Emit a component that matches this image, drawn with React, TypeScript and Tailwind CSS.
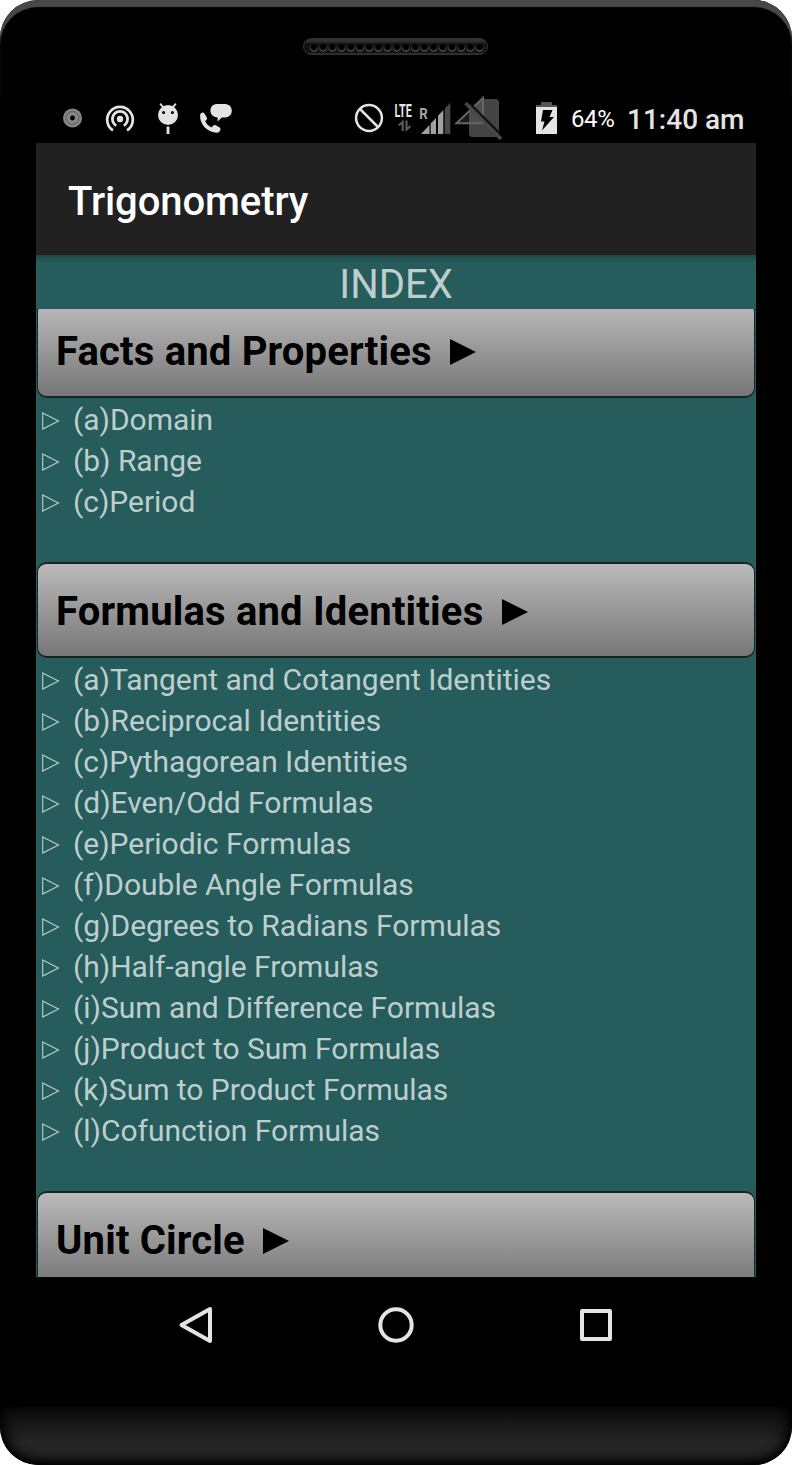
import React from "react";

interface Section {
  title: string;
  items: string[];
}

const sections: Section[] = [
  {
    title: "Facts and Properties",
    items: ["(a)Domain", "(b) Range", "(c)Period"],
  },
  {
    title: "Formulas and Identities",
    items: [
      "(a)Tangent and Cotangent Identities",
      "(b)Reciprocal Identities",
      "(c)Pythagorean Identities",
      "(d)Even/Odd Formulas",
      "(e)Periodic Formulas",
      "(f)Double Angle Formulas",
      "(g)Degrees to Radians Formulas",
      "(h)Half-angle Fromulas",
      "(i)Sum and Difference Formulas",
      "(j)Product to Sum Formulas",
      "(k)Sum to Product Formulas",
      "(l)Cofunction Formulas",
    ],
  },
  { title: "Unit Circle", items: [] },
];

const holes = Array.from({ length: 19 }, (_, i) => 11 + i * 9.2);

const Speaker: React.FC = () => (
  <svg width="186" height="18" viewBox="0 0 186 18">
    <defs>
      <linearGradient id="grille" x1="0" y1="0" x2="0" y2="1">
        <stop offset="0" stopColor="#2e2e2e" />
        <stop offset="0.2" stopColor="#303030" />
        <stop offset="0.3" stopColor="#151515" />
        <stop offset="0.85" stopColor="#101010" />
        <stop offset="1" stopColor="#3a3a3a" />
      </linearGradient>
      <linearGradient id="hole" x1="0" y1="0" x2="0" y2="1">
        <stop offset="0.3" stopColor="#161616" />
        <stop offset="1" stopColor="#6a6a6a" />
      </linearGradient>
    </defs>
    <rect x="0.5" y="0.5" width="184" height="16" rx="8" fill="url(#grille)" stroke="#333" />
    {holes.map((x) => (
      <circle key={x} cx={x} cy="9.3" r="3.7" fill="#000" stroke="url(#hole)" strokeWidth="1.1" />
    ))}
  </svg>
);

const StatusBar: React.FC = () => (
  <div className="flex h-12 items-center text-[#e4e4e4]">
    <svg width="500" height="48" viewBox="0 0 500 48" className="shrink-0">
      {/* disc */}
      <circle cx="36.5" cy="23" r="9.5" fill="#858585" />
      <circle cx="36.5" cy="23" r="6.5" fill="none" stroke="#5c5c5c" strokeWidth="1" />
      <circle cx="36.5" cy="23" r="2.4" fill="#000" />
      {/* hotspot */}
      <g fill="none" stroke="#e4e4e4" strokeWidth="2.7">
        <circle cx="84" cy="24" r="3.2" fill="#e4e4e4" stroke="none" />
        <path d="M80.2 30.6A7.6 7.6 0 1 1 87.8 30.6" />
        <path d="M77 35.4A12.8 12.8 0 1 1 91 35.4" />
      </g>
      {/* android lollipop */}
      <circle cx="132" cy="20" r="10" fill="#e4e4e4" />
      <path d="M124.2 8.6l3.2 4M139.8 8.6l-3.2 4" stroke="#e4e4e4" strokeWidth="1.8" />
      <circle cx="127.6" cy="17.5" r="1.5" fill="#000" />
      <circle cx="136.4" cy="17.5" r="1.5" fill="#000" />
      <rect x="130.6" y="31.5" width="2.8" height="7.5" fill="#e4e4e4" />
      {/* call with message */}
      <path
        d="M165 18.2c1-.8 2.6-1 3.4.3l2.3 3.7c.7 1.2.3 2.5-.7 3.2l-.9.7c1.3 3 3.6 5.2 6.4 6.4l1.5-1.6c.8-.9 2-1 3-.5l3.3 1.9c1.3.8 1.5 2 .9 3l-.9 1.4c-.5.7-1.3 1-2.2 1-10.4-.3-17.5-8.8-17-17.5 0-.8.3-1.5.9-2z"
        fill="#e4e4e4"
      />
      <path
        d="M181.5 9h6.5c4.8 0 7.8 2.7 7.8 6.7s-3 6.8-7.8 6.8h-2.2l-4.2 4v-4.1c-4.2-.4-7.2-2.9-7.2-6.7 0-4 2.8-6.7 7.1-6.7z"
        fill="#e4e4e4"
      />
      {/* blocked */}
      <circle cx="333" cy="23" r="12.9" fill="none" stroke="#e4e4e4" strokeWidth="2.5" />
      <path d="M324 14L342 32" stroke="#e4e4e4" strokeWidth="2.5" />
      <text transform="translate(358.4 22) scale(0.6 1)" className="font-bold" fontSize="18" fill="#e4e4e4">
        LTE
      </text>
      {/* data arrows */}
      <path d="M366.7 36V27L362.7 30.5M370.5 25.5V34.5L374.5 31" fill="none" stroke="#5a5a5a" strokeWidth="2.2" />
      <text transform="translate(383.2 24) scale(0.88 1)" className="font-bold" fontSize="15" fill="#a6a6a6">
        R
      </text>
      {/* signal bars */}
      <path d="M385 39l8.5-9.1V39zM394.7 28.6l5.3-5.6v16h-5.3zM402 20.8l5.3-5.6V39H402z" fill="#a0a0a0" />
      <path d="M408.7 13.7l5.6-6V39h-5.6z" fill="#484848" />
      {/* missing sim */}
      <path
        d="M446 4h13.5q3.5 0 3.5 3.5v31q0 3.5-3.5 3.5h-23q-3.5 0-3.5-3.5V17z"
        fill="#444"
      />
      <path d="M447 3L420.5 28.2H447z" fill="#666" fillOpacity="0.25" stroke="#666" strokeWidth="2" />
      <path d="M434 9L463 38" stroke="#111" strokeWidth="2.5" />
      <path d="M429.5 8L465 44" stroke="#484848" strokeWidth="3.5" />
    </svg>
    <svg width="22" height="32" viewBox="0 0 22 32" className="mt-[-3px] shrink-0">
      <path d="M5 0h11v3h5v2H0V3h5z" fill="#555" />
      <path d="M0 5h21v27H0z" fill="#e4e4e4" />
      <path d="M7 8h9.5l-3 7H18L6 28.5l2.5-9H5z" fill="#000" />
    </svg>
    <span className="ml-[13px] w-[43px] whitespace-nowrap text-[24px] tracking-[-0.4px] text-white">64%</span>
    <span className="ml-[13px] whitespace-nowrap pt-0.5 text-[28px] font-medium">11:40 am</span>
  </div>
);

const SectionButton: React.FC<{ title: string }> = ({ title }) => (
  <button className="mx-px flex h-24 shrink-0 items-center gap-[18.5px] rounded-[10px] border-x border-y-2 border-[#172424] bg-linear-to-b from-[#bababa] to-[#777777] pl-[18px] pt-1 text-left text-[40px] font-bold tracking-[0.18px] whitespace-nowrap text-black">
    {title}
    <svg width="26" height="26" viewBox="0 0 26 26">
      <path d="M0 0L26 13L0 26z" fill="#000" />
    </svg>
  </button>
);

const SectionList: React.FC<{ items: string[] }> = ({ items }) => (
  <ul className="shrink-0 pb-[41px]">
    {items.map((item) => (
      <li
        key={item}
        className="flex h-[41px] items-center gap-[13px] pl-1.5 text-[30px] leading-[41px] tracking-[-0.025px] whitespace-nowrap text-[#bdcecd]"
      >
        <svg width="18" height="18" viewBox="0 0 18 18" className="mt-1 shrink-0">
          <path d="M0.7 1L16.5 9L0.7 17z" fill="none" stroke="#bdcecd" strokeWidth="1.1" />
        </svg>
        <span className="pt-0.5">{item}</span>
      </li>
    ))}
  </ul>
);

const NavBar: React.FC = () => (
  <div className="flex h-24 items-center justify-center">
    <svg width="440" height="40" viewBox="0 0 440 40" fill="none" stroke="#e4e4e4" strokeWidth="4" strokeLinejoin="round">
      <path d="M34 4V36L5.5 20z" />
      <circle cx="220" cy="20" r="15.7" />
      <rect x="406" y="6" width="28" height="28" />
    </svg>
  </div>
);

const App: React.FC = () => {
  return (
    <div className="h-[1465px] w-[792px] bg-white font-['Roboto',sans-serif]">
      <div className="flex h-full flex-col overflow-hidden rounded-[38px] bg-black">
        <div className="flex h-[95px] shrink-0 justify-center rounded-t-[38px] pt-[38px] shadow-[inset_0_7px_1px_#484848]">
          <Speaker />
        </div>
        <div className="mx-9 flex shrink-0 flex-col">
          <StatusBar />
          <header className="flex h-28 items-center bg-[#212121] pl-8 pt-1.5">
            <h1 className="text-[40px] font-medium tracking-[-0.08px] text-white">Trigonometry</h1>
          </header>
          <main className="flex h-[1022px] flex-col bg-[#265c5b]">
            <h2 className="h-[54px] shrink-0 bg-linear-to-b from-[#1f4848] to-[#265c5b] to-[8px] pt-[5px] text-center text-[40px] leading-[50px] text-[#bdcecd]">
              INDEX
            </h2>
            <div className="flex-1 overflow-hidden">
              <div className="-mt-[7px] flex flex-col">
                {sections.map((section) => (
                  <React.Fragment key={section.title}>
                    <SectionButton title={section.title} />
                    <SectionList items={section.items} />
                  </React.Fragment>
                ))}
              </div>
            </div>
          </main>
          <NavBar />
        </div>
        <div className="mt-[34px] flex-1 rounded-b-[38px] bg-linear-to-b from-[#0c0c0c] via-[#252525] via-60% to-[#222222] shadow-[inset_0_-8px_9px_-4px_#000,inset_10px_0_16px_-6px_#000,inset_-10px_0_16px_-6px_#000]" />
      </div>
    </div>
  );
};

export default App;
